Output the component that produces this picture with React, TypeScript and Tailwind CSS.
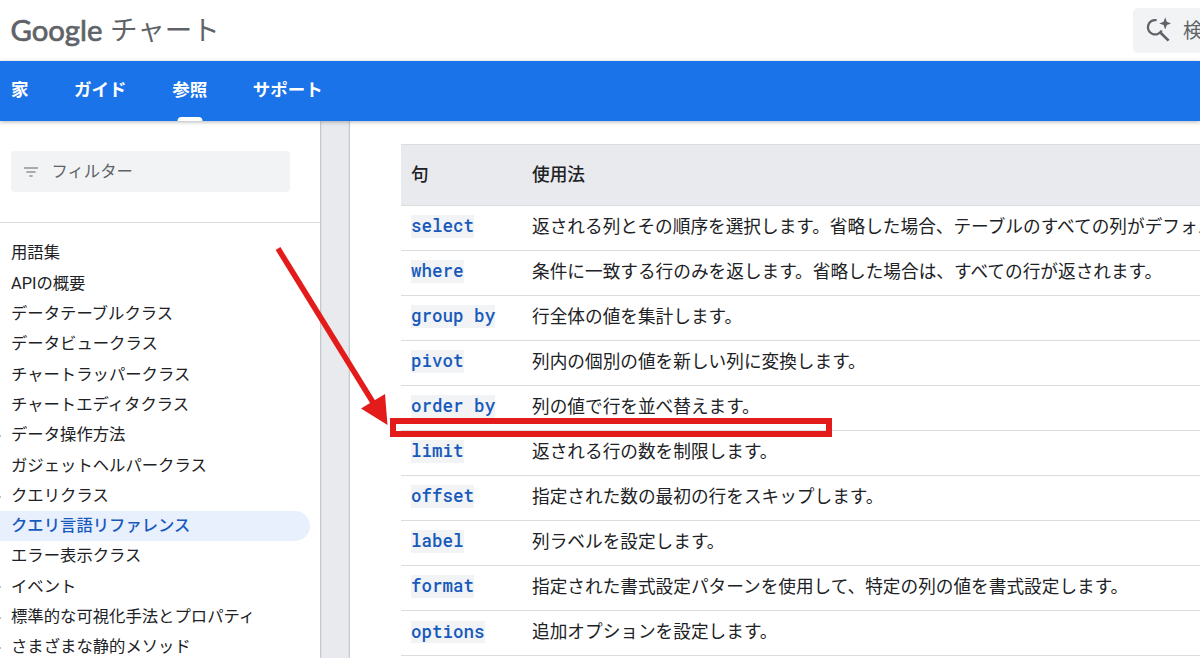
const navItems = [
  { label: '家', active: false },
  { label: 'ガイド', active: false },
  { label: '参照', active: true },
  { label: 'サポート', active: false },
];

const sideItems = [
  { label: '用語集' },
  { label: 'APIの概要' },
  { label: 'データテーブルクラス' },
  { label: 'データビュークラス' },
  { label: 'チャートラッパークラス' },
  { label: 'チャートエディタクラス' },
  { label: 'データ操作方法', group: true },
  { label: 'ガジェットヘルパークラス' },
  { label: 'クエリクラス', group: true },
  { label: 'クエリ言語リファレンス', active: true },
  { label: 'エラー表示クラス' },
  { label: 'イベント', group: true },
  { label: '標準的な可視化手法とプロパティ', group: true },
  { label: 'さまざまな静的メソッド', group: true },
];

const clauses = [
  ['select', '返される列とその順序を選択します。省略した場合、テーブルのすべての列がデフォルトの順序で返されます。'],
  ['where', '条件に一致する行のみを返します。省略した場合は、すべての行が返されます。'],
  ['group by', '行全体の値を集計します。'],
  ['pivot', '列内の個別の値を新しい列に変換します。'],
  ['order by', '列の値で行を並べ替えます。'],
  ['limit', '返される行の数を制限します。'],
  ['offset', '指定された数の最初の行をスキップします。'],
  ['label', '列ラベルを設定します。'],
  ['format', '指定された書式設定パターンを使用して、特定の列の値を書式設定します。'],
  ['options', '追加オプションを設定します。'],
];

function SearchSparkIcon() {
  return (
    <svg viewBox="0 0 26 26" className="h-[26px] w-[26px] shrink-0" fill="none">
      <path d="M11.6 3.2 A7.2 7.2 0 1 0 16.6 13.4" stroke="#5f6368" strokeWidth="2.3" />
      <path d="M14.8 15 L23.6 23.6" stroke="#5f6368" strokeWidth="2.7" />
      <path d="M20.2 0.2 L21.8 4.8 L26 6.4 L21.8 8 L20.2 12.6 L18.6 8 L14.2 6.4 L18.6 4.8 Z" fill="#5f6368" />
    </svg>
  );
}

function Header() {
  return (
    <header className="flex h-[60.5px] shrink-0 items-center justify-between bg-white pl-[11px]">
      <div className="flex items-center text-[#5f6368]">
        <svg width="99" height="44" className="shrink-0">
          <text
            x="-0.5"
            y="32.5"
            textLength="92"
            lengthAdjust="spacingAndGlyphs"
            fill="#5f6368"
            stroke="#5f6368"
            strokeWidth="0.7"
            className="font-['Lato',sans-serif] text-[29.5px] font-normal"
          >
            Google
          </text>
        </svg>
        <span className="text-[27.5px] leading-none">チャート</span>
      </div>
      <div className="flex h-[45px] w-[67px] items-center overflow-hidden rounded-l-[5px] bg-[#f1f3f4] pl-[12px]">
        <SearchSparkIcon />
        <span className="ml-[12px] shrink-0 pt-px text-[20px] text-[#5f6368]">検索</span>
      </div>
    </header>
  );
}

function NavBar() {
  return (
    <nav className="relative z-10 flex h-[60.5px] shrink-0 gap-[45.6px] bg-[#1a73e8] pl-[11px] text-[17.5px] font-bold text-white shadow-[0_1px_4px_rgba(60,64,67,0.4)]">
      {navItems.map((item) => (
        <a key={item.label} className="relative flex items-center pb-px">
          {item.label}
          {item.active && (
            <span className="absolute bottom-0 left-1/2 h-[4px] w-[25px] -translate-x-1/2 rounded-t-[4px] bg-white" />
          )}
        </a>
      ))}
    </nav>
  );
}

function Sidebar() {
  return (
    <aside className="w-[320px] shrink-0 bg-white">
      <div className="h-[102px] border-b border-[#dadce0] pt-[30.4px] pl-[11px]">
        <div className="flex h-[40.5px] w-[279px] items-center rounded-[4px] bg-[#f1f3f4] pl-[13px] text-[16.35px] text-[#5f6368]">
          <svg width="14" height="10" viewBox="0 0 14 10" stroke="#5f6368" strokeWidth="1">
            <path d="M0 1H14M2.4 5H11.6M5.4 9H8.6" />
          </svg>
          <span className="ml-[13.5px] pt-[2px]">フィルター</span>
        </div>
      </div>
      <ul className="pt-[15.2px] text-[16.35px] text-[#202124]">
        {sideItems.map((item) => (
          <li
            key={item.label}
            className={
              item.active
                ? 'relative mr-[10px] flex h-[30.3px] items-center rounded-r-full bg-[#e8f0fe] pl-[11px] font-medium text-[#185abc]'
                : 'relative flex h-[30.3px] items-center pl-[11px]'
            }
          >
            {item.group && <span className="absolute left-0 top-[15px] h-[2px] w-px bg-[#bdc1c6]" />}
            <span className="whitespace-nowrap pt-[0.7px]">{item.label}</span>
          </li>
        ))}
      </ul>
    </aside>
  );
}

function ClauseTable() {
  return (
    <div className="flex-1 overflow-hidden bg-white pl-[51px] pt-[23px] text-[17.66px] text-[#202124]">
      <div className="flex h-[61.5px] items-center border-y border-[#dadce0] bg-[#e8eaed] font-medium">
        <div className="w-[131px] shrink-0 pl-[10px]">句</div>
        <div>使用法</div>
      </div>
      {clauses.map(([name, usage]) => (
        <div key={name} className="flex h-[45.05px] items-center border-b border-[#dadce0] pb-[2.4px]">
          <div className="w-[131px] shrink-0 pl-[10px]">
            <code className="block h-[22.5px] w-fit bg-[#f1f3f4] font-['Roboto_Mono','DejaVu_Sans_Mono',monospace] text-[17.55px] font-medium leading-[22.6px] text-[#185abc]">
              {name}
            </code>
          </div>
          <div className="whitespace-nowrap pt-[1.2px]">{usage}</div>
        </div>
      ))}
    </div>
  );
}

export default function App() {
  return (
    <div className="relative flex h-[658px] w-[1200px] flex-col overflow-hidden bg-[#e8eaed] font-['Roboto','Noto_Sans_CJK_JP',sans-serif]">
      <Header />
      <NavBar />
      <div className="flex min-h-0 flex-1 gap-[30px]">
        <div className="flex shadow-[0_0_2px_rgba(60,64,67,0.6)]">
          <Sidebar />
        </div>
        <div className="flex min-w-0 flex-1 shadow-[0_0_2px_rgba(60,64,67,0.6)]">
          <ClauseTable />
        </div>
      </div>

      {/* red annotation over the table */}
      <div className="absolute left-[390px] top-[418px] z-20 h-[19px] w-[442px] border-[6px] border-[#e31b1b]" />
      <svg className="absolute left-0 top-0 z-20" width="400" height="440" fill="#e31b1b">
        <path d="M278 248.5L374 404" stroke="#e31b1b" strokeWidth="5.6" />
        <path d="M387.5 425L361 408.5L385 394Z" />
      </svg>
    </div>
  );
}
